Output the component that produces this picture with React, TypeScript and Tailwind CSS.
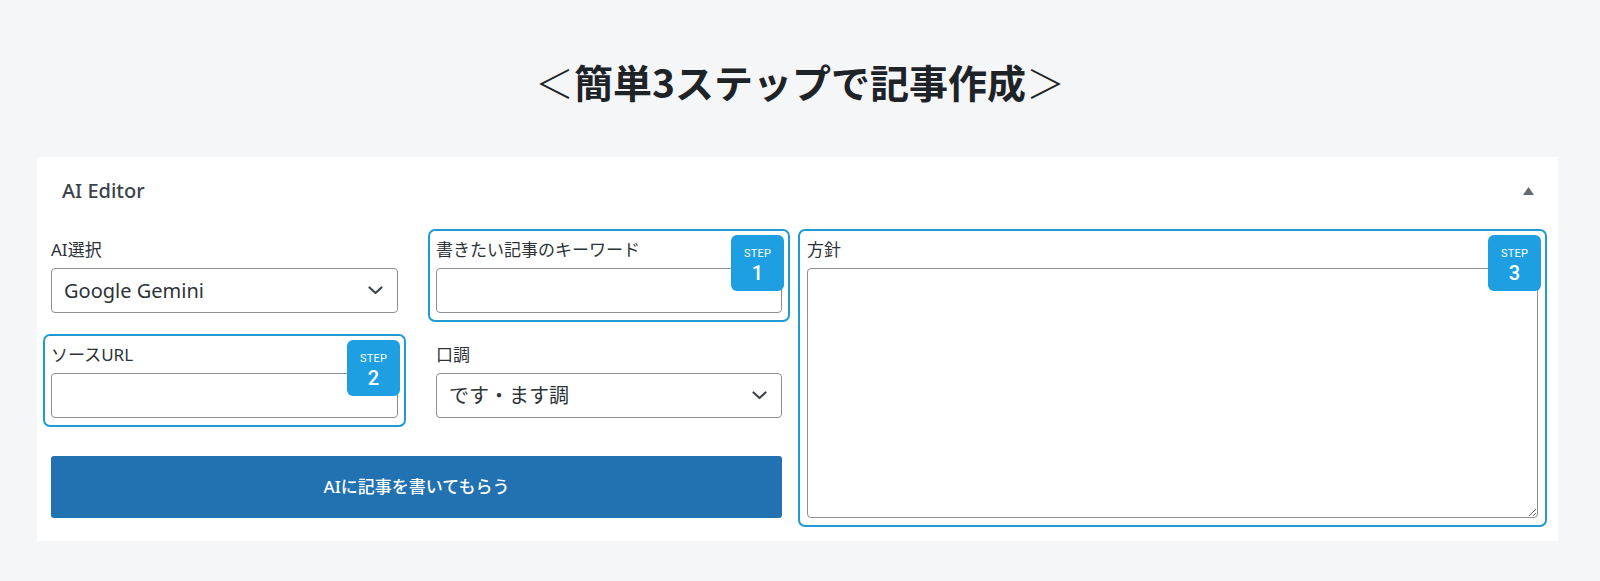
import React from "react";

function Badge({ n }: { n: number }) {
  return (
    <div className="absolute top-[4px] right-[4px] w-[53px] h-[56px] rounded-[6px] bg-[#1d9fe2] text-white flex flex-col items-center pt-[13px] font-['Roboto',sans-serif]">
      <span className="text-[11px] leading-[12px] tracking-[0.2px]">STEP</span>
      <span className="text-[20px] leading-[20px] font-medium mt-[3px]">{n}</span>
    </div>
  );
}

function Label({ children }: { children: React.ReactNode }) {
  return <div className="text-[17px] leading-[24px] mb-[6px] text-[#2c3338]">{children}</div>;
}

function Chevron() {
  return (
    <svg width="15" height="9" viewBox="0 0 15 9" className="shrink-0">
      <polyline points="1.5,1.5 7.5,7 13.5,1.5" fill="none" stroke="#3c434a" strokeWidth="2.2" strokeLinecap="round" strokeLinejoin="round" />
    </svg>
  );
}

function SelectBox({ children }: { children: React.ReactNode }) {
  return (
    <div className="h-[45px] w-full border border-[#8c8f94] rounded-[4px] bg-white flex items-center justify-between pl-[12px] pr-[14px] text-[20px] text-[#2c3338]">
      <span>{children}</span>
      <Chevron />
    </div>
  );
}

function InputBox() {
  return <input type="text" className="block h-[45px] w-full border border-[#8c8f94] rounded-[4px] bg-white outline-none" />;
}

export default function App() {
  return (
    <div className="min-h-[581px] bg-[#f5f6f8] pt-[57px] pb-[40px] font-['Noto_Sans','Noto_Sans_CJK_JP',sans-serif]">
      <h1 className="text-center text-[39px] leading-[48px] font-bold text-[#1d2327] font-['Noto_Sans_CJK_JP',sans-serif] mb-[52px]">
        <span className="font-light">＜</span>簡単3ステップで記事作成<span className="font-light">＞</span>
      </h1>
      <div className="ml-[37px] mr-[42px] bg-white">
        <div className="h-[68px] flex items-center justify-between pl-[25px] pr-[24px]">
          <span className="text-[20px] font-medium text-[#3c434a]">AI Editor</span>
          <svg width="11" height="8" viewBox="0 0 11 8">
            <polygon points="5.5,0 11,8 0,8" fill="#646970" />
          </svg>
        </div>
        <div className="flex pt-[13px] pl-[14px] pr-[20px] pb-[23px]">
          <div className="w-[731px] flex flex-col">
            <div className="grid grid-cols-[347px_346px] gap-x-[38px] gap-y-[30px]">
              <div>
                <Label>AI選択</Label>
                <SelectBox>Google Gemini</SelectBox>
              </div>
              <div className="relative -mx-2 -my-[9px] px-[6px] py-[7px] border-2 border-[#1f9ad3] rounded-[7px]">
                <Label>書きたい記事のキーワード</Label>
                <InputBox />
                <Badge n={1} />
              </div>
              <div className="relative -mx-2 -my-[9px] px-[6px] py-[7px] border-2 border-[#1f9ad3] rounded-[7px]">
                <Label>ソースURL</Label>
                <InputBox />
                <Badge n={2} />
              </div>
              <div>
                <Label>口調</Label>
                <SelectBox>です・ます調</SelectBox>
              </div>
            </div>
            <button className="mt-[38px] h-[62px] w-full rounded-[3px] bg-[#2271b1] text-white text-[17px] font-medium">
              AIに記事を書いてもらう
            </button>
          </div>
          <div className="ml-[16px] -mr-[9px] -my-[9px] flex-1 relative p-[7px] border-2 border-[#1f9ad3] rounded-[7px] flex flex-col">
            <Label>方針</Label>
            <textarea className="block flex-1 h-[250px] w-full border border-[#8c8f94] rounded-[4px] bg-white outline-none" />
            <Badge n={3} />
          </div>
        </div>
      </div>
    </div>
  );
}
